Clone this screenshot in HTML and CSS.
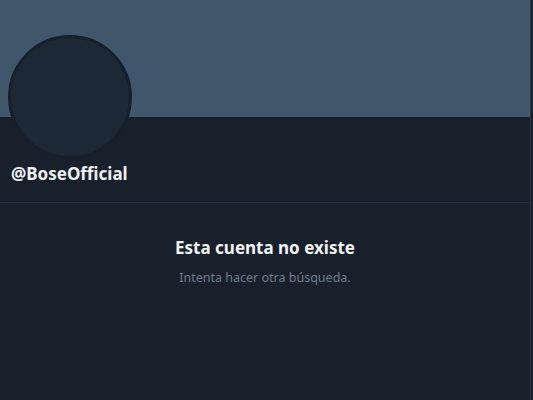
FILE: index.html
```html
<!DOCTYPE html>
<html lang="es">
<head>
<meta charset="utf-8">
<link rel="stylesheet" href="styles.css">
</head>
<body>
<main class="column">
  <div class="banner"></div>
  <section class="profile">
    <div class="avatar"></div>
    <div class="handle">@BoseOfficial</div>
  </section>
  <section class="empty">
    <h2 class="empty-title">Esta cuenta no existe</h2>
    <p class="empty-sub">Intenta hacer otra búsqueda.</p>
  </section>
</main>
</body>
</html>
```

FILE: styles.css
```css
html, body {
  margin: 0;
  padding: 0;
  height: 100%;
  background: #17202b;
}
body {
  font-family: "Noto Sans", "Open Sans", sans-serif;
  color: #ffffff;
  overflow: hidden;
}
.column {
  width: 530px;
  height: 100%;
  border-right: 1px solid #2b3743;
}
.banner {
  height: 117px;
  background: #3f566b;
}
.profile {
  display: flex;
  flex-direction: column;
  align-items: flex-start;
  padding: 0 0 0 8px;
  height: 85px;
  border-bottom: 1px solid #2a3541;
}
.avatar {
  width: 118px;
  height: 118px;
  flex: none;
  border-radius: 50%;
  background: #1c2836;
  border: 3px solid #16202b;
  margin-top: -82px;
}
.handle {
  margin: 5px 0 0 3px;
  font-size: 17px;
  font-weight: 700;
  line-height: 20px;
  color: #eef1f4;
}
.empty {
  text-align: center;
  padding-top: 35px;
}
.empty-title {
  margin: 0;
  font-size: 17px;
  font-weight: 700;
  line-height: 20px;
  color: #f2f4f6;
}
.empty-sub {
  margin: 12px 0 0;
  font-size: 12.5px;
  line-height: 16px;
  color: #6f7e8c;
}
```
